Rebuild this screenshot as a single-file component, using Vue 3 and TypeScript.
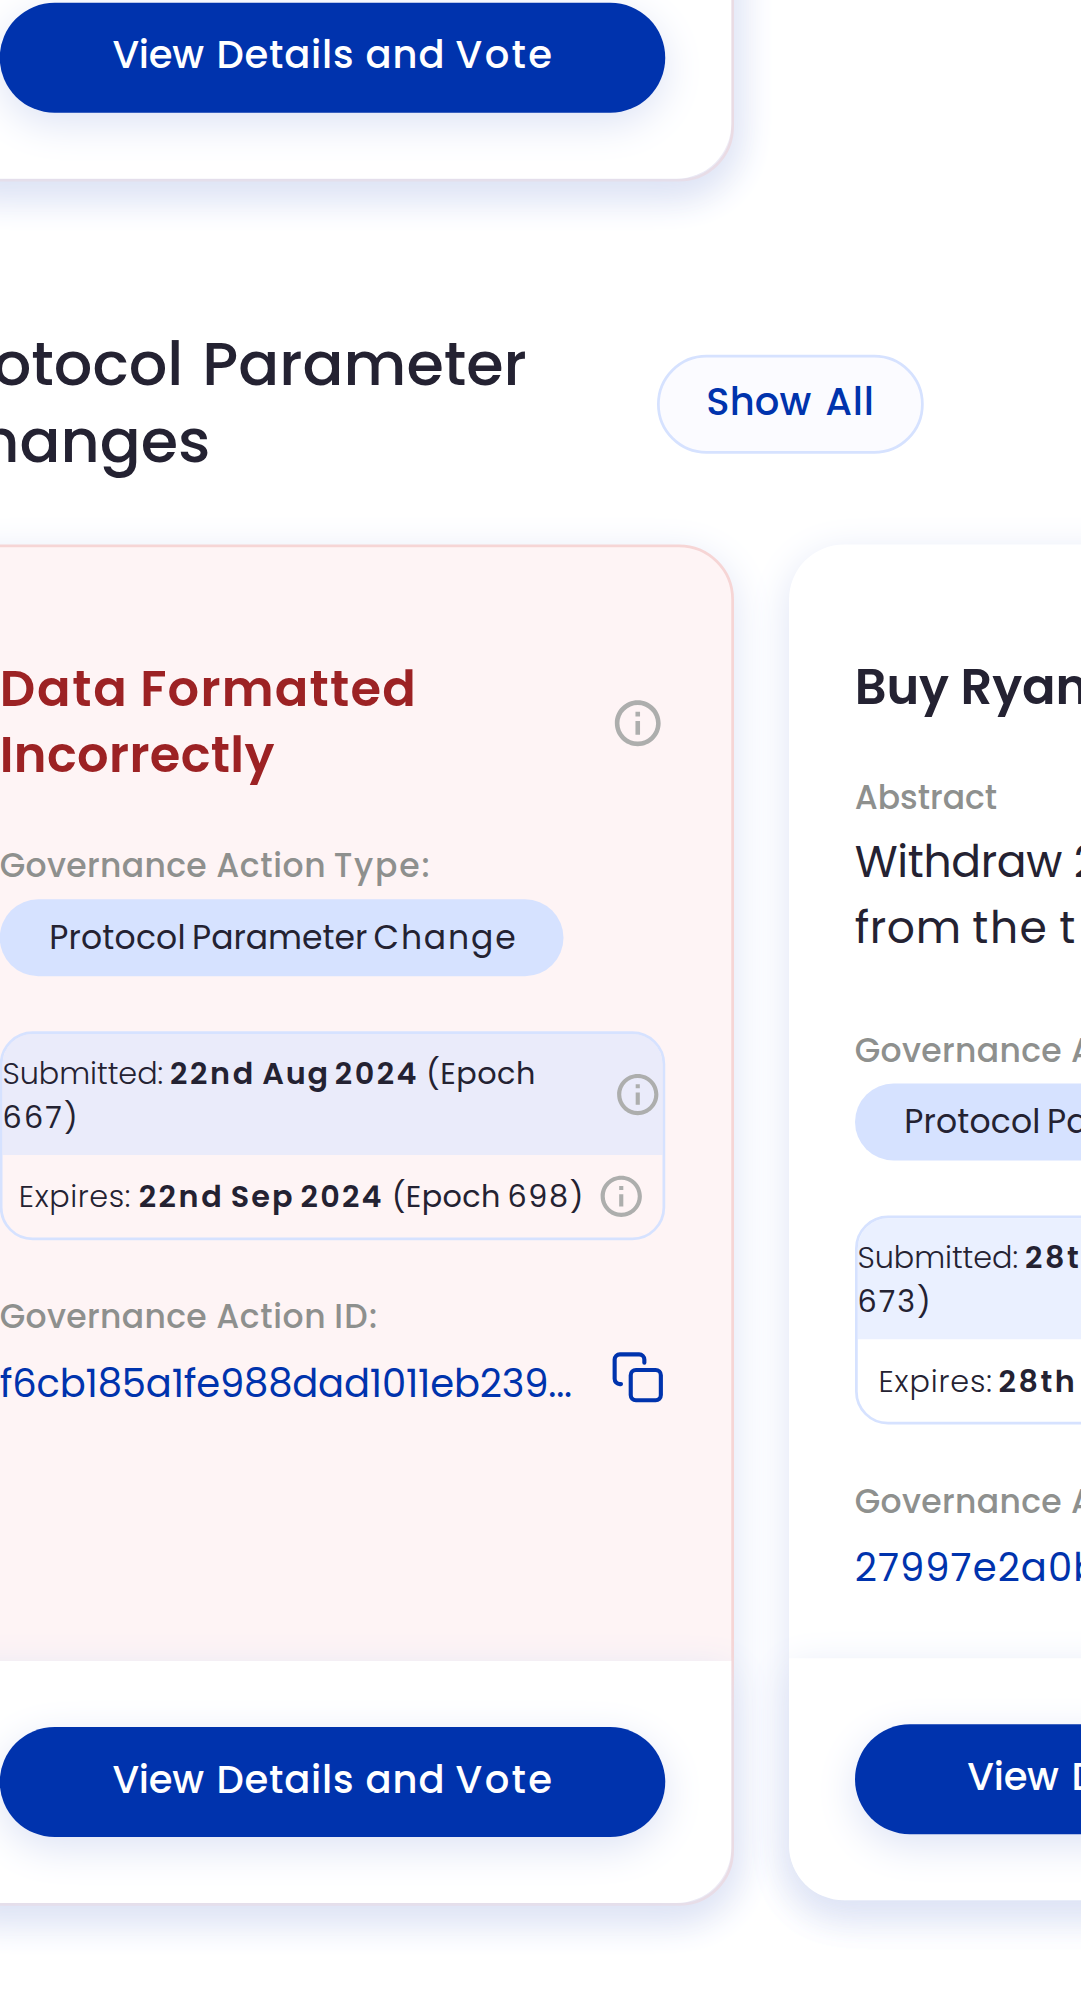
<script setup lang="ts">
import { h, type FunctionalComponent } from 'vue'

// A word with its letter spacing and the extra gap before it, in px.
type Word = [text: string, tracking: number, lead?: number]

const Tracked: FunctionalComponent<{ words: Word[] }> = ({ words }) =>
  words.flatMap(([text, tracking, lead = 0], i) => {
    const word = h(
      'span',
      { style: { letterSpacing: `${tracking}px`, marginLeft: `${lead}px` } },
      text,
    )
    return i ? [' ', word] : [word]
  })
Tracked.props = ['words']

interface GovernanceAction {
  key: string
  title: Word[]
  malformed: boolean
  abstract?: Word[]
  submitted: Word[]
  submittedEpoch: Word[]
  expiresLabel: Word[]
  expires: Word[]
  expiresEpoch: Word[]
  id: Word[]
}

const voteLabel: Word[] = [['View', -0.11], ['Details', 0.28, 1.06], ['and', 0.35, 0.44], ['Vote', 0.86]]
const showAllLabel: Word[] = [['Show', 0.08], ['All', 0.25, 1.35]]
const typeLabel: Word[] = [['Governance', 0.12], ['Action', 0.24, 0.19], ['Type:', 0.66, -0.49]]
const idLabel: Word[] = [['Governance', 0.12], ['Action', 0.24, 0.19], ['ID:', 0.5, -0.3]]
const typeName: Word[] = [['Protocol', 0.07], ['Parameter', 0, -0.93], ['Change', 0.68, -0.98]]
const submittedLabel: Word[] = [['Submitted:', -0.02]]

const actions: GovernanceAction[] = [
  {
    key: 'a',
    title: [['Data', 0.63], ['Formatted', 0.45, -0.08], ['Incorrectly', 0.13]],
    malformed: true,
    submitted: [['22nd', 0.96, -0.47], ['Aug', 0.63, -0.29], ['2024', 0.91, -0.77]],
    submittedEpoch: [['(Epoch', 0.19, -0.46], ['667)', 0.81]],
    expiresLabel: [['Expires:', 0.22]],
    expires: [['22nd', 0.95, -0.23], ['Sep', 0.75, -0.32], ['2024', 0.81, -0.43]],
    expiresEpoch: [['(Epoch', 0.14, -0.07], ['698)', 0.6, -0.52]],
    id: [['f6cb185a1fe988dad1011eb239...', -0.065]],
  },
  {
    key: 'b',
    title: [['Buy', -0.05], ['Ryan', -0.05]],
    malformed: false,
    abstract: [['Withdraw', -0.12], ['2', 0], ['from', 0.23], ['the', 0.56, -0.39], ['t', 0, -0.4]],
    submitted: [['28th', 0.93, -0.47], ['Aug', 0.63, -0.29], ['2024', 0.91, -0.77]],
    submittedEpoch: [['(Epoch', 0.19, -0.46], ['673)', 0.74]],
    expiresLabel: [['Expires:', 0.31]],
    expires: [['28th', 0.93, -0.9], ['Sep', 0.75, -0.32], ['2024', 0.81, -0.43]],
    expiresEpoch: [['(Epoch', 0.14, -0.07], ['704)', 0.6, -0.52]],
    id: [['27997e2a0b', 0.387]],
  },
]
</script>

<template>
  <div class="viewport">
    <div class="page">
      <article class="card malformed previous">
        <footer class="card-footer">
          <button class="vote"><span><Tracked :words="voteLabel" /></span></button>
        </footer>
      </article>

      <header class="section-head">
        <h2>Protocol Parameter Changes</h2>
        <button class="show-all"><span><Tracked :words="showAllLabel" /></span></button>
      </header>

      <div class="slider">
        <article
          v-for="a in actions"
          :key="a.key"
          class="card"
          :class="{ malformed: a.malformed }"
        >
          <div class="card-body">
            <div class="title-row">
              <h3><Tracked :words="a.title" /></h3>
              <svg v-if="a.malformed" class="info large" viewBox="0 0 24 24">
                <path d="M11 7h2v2h-2zm0 4h2v6h-2zm1-9C6.480 2 2 6.480 2 12s4.480 10 10 10 10-4.480 10-10S17.520 2 12 2m0 18c-4.410 0-8-3.590-8-8s3.590-8 8-8 8 3.590 8 8-3.590 8-8 8" />
              </svg>
            </div>

            <div v-if="a.abstract" class="abstract">
              <span class="label">Abstract</span>
              <p><Tracked :words="a.abstract" /></p>
            </div>

            <div class="type">
              <span class="label"><Tracked :words="typeLabel" /></span>
              <span class="chip"><Tracked :words="typeName" /></span>
            </div>

            <div class="dates">
              <div class="date submitted">
                <p>
                  <span class="light"><Tracked :words="submittedLabel" />{{ ' ' }}</span>
                  <b><Tracked :words="a.submitted" /></b>
                  {{ ' ' }}<Tracked :words="a.submittedEpoch" />
                </p>
                <svg class="info" viewBox="0 0 24 24">
                  <path d="M11 7h2v2h-2zm0 4h2v6h-2zm1-9C6.480 2 2 6.480 2 12s4.480 10 10 10 10-4.480 10-10S17.520 2 12 2m0 18c-4.410 0-8-3.590-8-8s3.590-8 8-8 8 3.590 8 8-3.590 8-8 8" />
                </svg>
              </div>
              <div class="date">
                <p>
                  <span class="light"><Tracked :words="a.expiresLabel" />{{ ' ' }}</span>
                  <b><Tracked :words="a.expires" /></b>
                  {{ ' ' }}<Tracked :words="a.expiresEpoch" />
                </p>
                <svg class="info" viewBox="0 0 24 24">
                  <path d="M11 7h2v2h-2zm0 4h2v6h-2zm1-9C6.480 2 2 6.480 2 12s4.480 10 10 10 10-4.480 10-10S17.520 2 12 2m0 18c-4.410 0-8-3.590-8-8s3.590-8 8-8 8 3.590 8 8-3.590 8-8 8" />
                </svg>
              </div>
            </div>

            <div>
              <span class="label"><Tracked :words="idLabel" /></span>
              <div class="id-row">
                <span class="id"><Tracked :words="a.id" /></span>
                <svg class="copy" viewBox="0 0 20 20">
                  <path d="M3.900 12.300H3.500A1.900 1.900 0 0 1 1.600 10.400V3.400A1.900 1.900 0 0 1 3.500 1.500H10.500A1.900 1.900 0 0 1 12.400 3.400V4.500" />
                  <rect x="7.450" y="7.200" width="10.950" height="11" rx="1.900" />
                </svg>
              </div>
            </div>
          </div>
          <footer class="card-footer">
            <button class="vote"><span><Tracked :words="voteLabel" /></span></button>
          </footer>
        </article>
      </div>
    </div>
  </div>
</template>

<style>
html,
body {
  background: #fff;
}
</style>

<style scoped>
.viewport {
  width: 1081px;
  height: 1999px;
  overflow: hidden;
  background: #fff;
}
.page {
  box-sizing: border-box;
  width: 620px;
  height: 727px;
  margin-left: -68.75px;
  transform: scale(2.75);
  transform-origin: 0 0;
  overflow: hidden;
  font-family: Poppins, Inter, sans-serif;
  color: #242232;
}
h2,
h3,
p {
  margin: 0;
}
button {
  display: flex;
  align-items: center;
  justify-content: center;
  padding: 0 0 2px;
  border: 0;
  font: 500 14px/24px Poppins, Inter, sans-serif;
}
.card {
  box-sizing: border-box;
  flex: none;
  display: flex;
  flex-direction: column;
  width: 289.8px;
  border-radius: 20px;
  background: #fff;
  box-shadow: 0 4px 15px 0 #dde3f5;
}
.card.malformed {
  width: 291.8px;
  border: 1px solid #f6d5d5;
  background: #fef4f5;
}
.card.previous {
  height: 495px;
  margin-top: -429.27px;
  justify-content: flex-end;
}
.card-footer {
  padding: 24px;
  border-radius: 0 0 20px 20px;
  background: #fff;
  box-shadow: 0 4px 15px 0 #dde3f5;
}
.vote {
  box-sizing: border-box;
  width: 100%;
  height: 40px;
  padding-left: 0.9px;
  border-radius: 20px;
  background: #0033ad;
  color: #fff;
  box-shadow: 0 4px 15px 0 #dde3f5;
}
.previous .vote span {
  transform: translateY(-0.2px);
}
.section-head {
  display: flex;
  align-items: center;
  justify-content: space-between;
  width: 361px;
  margin: 53px 0 23px;
}
h2 {
  width: 240px;
  padding-left: 0.9px;
  font-size: 22px;
  line-height: 28px;
  font-weight: 500;
  word-spacing: 1.2px;
}
.show-all {
  box-sizing: border-box;
  width: 97px;
  height: 36px;
  border: 1px solid #d6e2ff;
  border-radius: 18px;
  background: #fbfbff;
  color: #0033ad;
}
.slider {
  display: flex;
  align-items: flex-start;
  gap: 20.1px;
}
.card-body {
  box-sizing: border-box;
  height: 404.9px;
  padding: 40px 24px 0;
}
.title-row {
  display: flex;
  align-items: center;
  justify-content: space-between;
  margin-bottom: 20px;
}
h3 {
  width: 200px;
  font-size: 18px;
  line-height: 24px;
  font-weight: 600;
}
.malformed h3 {
  transform: translateY(-0.35px);
  color: #9c2224;
}
.label {
  display: block;
  margin-bottom: 4px;
  font-size: 12px;
  line-height: 16px;
  font-weight: 500;
  color: #8e908e;
}
.abstract {
  margin-bottom: 24px;
}
.abstract p {
  width: 100px;
  font-size: 16px;
  line-height: 24px;
}
.chip {
  display: block;
  box-sizing: border-box;
  width: 205px;
  padding: 6px 0 6px 18px;
  border-radius: 14px;
  background: #d6e2ff;
  font-size: 12px;
  line-height: 16px;
  white-space: nowrap;
}
.dates {
  margin: 20px 0;
  border: 1px solid #d6e2ff;
  border-radius: 12px;
  overflow: hidden;
}
.date {
  display: flex;
  align-items: center;
  justify-content: center;
  gap: 4px;
  padding: 6px 0;
  font-size: 11px;
  line-height: 16px;
}
.submitted {
  justify-content: space-between;
  background: rgba(214, 226, 255, 0.5);
}
.light {
  font-weight: 300;
  white-space: pre-wrap;
}
b {
  font-weight: 600;
}
.info {
  flex: none;
  width: 18px;
  height: 18px;
  fill: #adaead;
}
.info.large {
  width: 20px;
  height: 20px;
}
.id-row {
  display: flex;
  justify-content: space-between;
}
.id {
  margin-top: 2px;
  font-size: 14px;
  line-height: 20px;
  color: #0033ad;
}
.copy {
  flex: none;
  width: 20px;
  height: 20px;
  fill: none;
  stroke: #0033ad;
  stroke-width: 1.5;
  stroke-linecap: round;
  stroke-linejoin: round;
}
</style>
